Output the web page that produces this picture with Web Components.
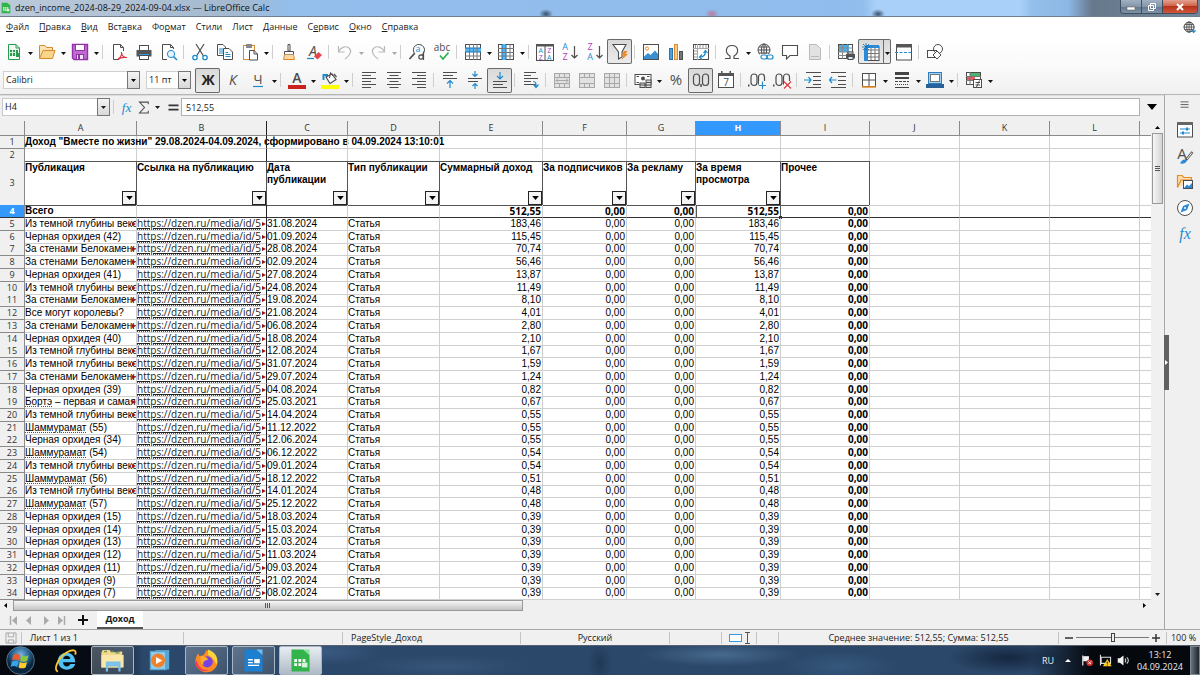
<!DOCTYPE html>
<html lang="ru">
<head>
<meta charset="utf-8">
<title>dzen_income_2024-08-29_2024-09-04.xlsx — LibreOffice Calc</title>
<style>
  html, body { height: 100%; margin: 0; }
  body { font: 9px/12px "Open Sans", "Noto Sans", sans-serif; color: #1a1a1a; background: #f0f0f0; overflow: hidden; }
</style>
</head>
<body>
<calc-window>
  <title-bar slot="title">dzen_income_2024-08-29_2024-09-04.xlsx — LibreOffice Calc</title-bar>
  <menu-bar slot="top"></menu-bar>
  <tool-bar slot="top" label="Стандартная">
    <tool-button icon="new" label="Создать" drop></tool-button>
    <tool-button icon="open" label="Открыть" drop></tool-button>
    <tool-button icon="save" label="Сохранить" drop></tool-button>
    <tool-sep></tool-sep>
    <tool-button icon="pdf" label="Экспорт в PDF"></tool-button>
    <tool-button icon="print" label="Печать"></tool-button>
    <tool-button icon="preview" label="Предварительный просмотр"></tool-button>
    <tool-sep></tool-sep>
    <tool-button icon="cut" label="Вырезать"></tool-button>
    <tool-button icon="copy" label="Копировать"></tool-button>
    <tool-button icon="paste" label="Вставить" drop></tool-button>
    <tool-sep></tool-sep>
    <tool-button icon="brush" label="Копировать форматирование"></tool-button>
    <tool-button icon="clear" label="Очистить форматирование"></tool-button>
    <tool-sep></tool-sep>
    <tool-button icon="undo" label="Отменить" drop off></tool-button>
    <tool-button icon="redo" label="Повторить" drop off></tool-button>
    <tool-sep></tool-sep>
    <tool-button icon="find" label="Найти и заменить"></tool-button>
    <tool-button icon="spell" label="Орфография"></tool-button>
    <tool-sep></tool-sep>
    <tool-button icon="row" label="Строка" drop></tool-button>
    <tool-button icon="col" label="Столбец" drop></tool-button>
    <tool-sep></tool-sep>
    <tool-button icon="sort" label="Сортировка"></tool-button>
    <tool-button icon="asc" label="По возрастанию"></tool-button>
    <tool-button icon="desc" label="По убыванию"></tool-button>
    <tool-button icon="filter" label="Автофильтр" on></tool-button>
    <tool-sep></tool-sep>
    <tool-button icon="image" label="Изображение"></tool-button>
    <tool-button icon="chart" label="Диаграмма"></tool-button>
    <tool-button icon="pivot" label="Сводная таблица"></tool-button>
    <tool-sep></tool-sep>
    <tool-button icon="omega" label="Специальный символ" drop></tool-button>
    <tool-button icon="link" label="Гиперссылка"></tool-button>
    <tool-button icon="comment" label="Комментарий"></tool-button>
    <tool-button icon="header" label="Колонтитулы" off></tool-button>
    <tool-sep></tool-sep>
    <tool-button icon="range" label="Область печати"></tool-button>
    <tool-button icon="freeze" label="Закрепить" drop on></tool-button>
    <tool-button icon="split" label="Разделить окно"></tool-button>
    <tool-sep></tool-sep>
    <tool-button icon="shapes" label="Рисование"></tool-button>
  </tool-bar>
  <tool-bar slot="top" label="Форматирование">
    <combo-select label="Шрифт" value="Calibri" style="--w:137px"></combo-select>
    <combo-select label="Кегль" value="11 пт" style="--w:45px"></combo-select>
    <tool-button icon="bold" label="Полужирный" on></tool-button>
    <tool-button icon="italic" label="Курсив"></tool-button>
    <tool-button icon="under" label="Подчёркивание" drop></tool-button>
    <tool-sep></tool-sep>
    <tool-button icon="color" label="Цвет шрифта" drop></tool-button>
    <tool-button icon="fill" label="Цвет фона" drop></tool-button>
    <tool-sep></tool-sep>
    <tool-button icon="left" label="По левому краю"></tool-button>
    <tool-button icon="center" label="По центру"></tool-button>
    <tool-button icon="right" label="По правому краю"></tool-button>
    <tool-sep></tool-sep>
    <tool-button icon="top" label="По верхнему краю"></tool-button>
    <tool-button icon="middle" label="По центру по вертикали"></tool-button>
    <tool-button icon="bottom" label="По нижнему краю" on></tool-button>
    <tool-sep></tool-sep>
    <tool-button icon="wrap" label="Перенос текста"></tool-button>
    <tool-sep></tool-sep>
    <tool-button icon="merge1" label="Объединить и центрировать" off></tool-button>
    <tool-button icon="merge2" label="Объединить ячейки" off></tool-button>
    <tool-button icon="merge3" label="Разъединить ячейки" off></tool-button>
    <tool-sep></tool-sep>
    <tool-button icon="money" label="Денежный" drop></tool-button>
    <tool-button icon="percent" label="Процентный"></tool-button>
    <tool-button icon="number" label="Числовой" on></tool-button>
    <tool-button icon="date" label="Дата"></tool-button>
    <tool-sep></tool-sep>
    <tool-button icon="decadd" label="Добавить разряд"></tool-button>
    <tool-button icon="decdel" label="Удалить разряд"></tool-button>
    <tool-sep></tool-sep>
    <tool-button icon="indent" label="Увеличить отступ"></tool-button>
    <tool-button icon="outdent" label="Уменьшить отступ"></tool-button>
    <tool-sep></tool-sep>
    <tool-button icon="borders" label="Обрамление" drop></tool-button>
    <tool-button icon="bstyle" label="Стиль обрамления" drop></tool-button>
    <tool-button icon="bcolor" label="Цвет обрамления" drop></tool-button>
    <tool-sep></tool-sep>
    <tool-button icon="cond" label="Условное форматирование" drop></tool-button>
  </tool-bar>
  <formula-bar></formula-bar>
  <sheet-view></sheet-view>
  <sheet-tabs></sheet-tabs>
  <side-bar slot="side"></side-bar>
  <status-bar slot="bottom"></status-bar>
  <task-bar slot="bottom"></task-bar>
</calc-window>

<script>
const define = (tag, render) => customElements.define(tag, class extends HTMLElement {
  connectedCallback() {
    if (this.shadowRoot) return;
    this.attachShadow({ mode: 'open' }).innerHTML =
      '<style>*,:host{box-sizing:border-box}button,input,select{font:inherit;color:inherit;margin:0;padding:0;border:0;background:none;min-width:0}svg{display:block;overflow:visible}</style>' + render(this);
  }
});

/* ---------- icon set, drawn on an 18 x 18 grid ---------- */
const K = '#4d4d4d', B = '#1e8bcd', G = '#a8a8a8';
const p = (d, c = K, w = 1, f = 'none') => `<path d="${d}" stroke="${c}" stroke-width="${w}" fill="${f}"/>`;
const r = (x, y, w, h, f = 'none', s = 'none') => `<rect x="${x}" y="${y}" width="${w}" height="${h}" fill="${f}" stroke="${s}"/>`;
const t = (x, y, size, c, s, extra = '') => `<text x="${x}" y="${y}" font-size="${size}" fill="${c}" text-anchor="middle" font-family="Open Sans, sans-serif" ${extra}>${s}</text>`;
const zero = x => `<rect x="${x}" y="3" width="6" height="11.500" rx="3" fill="none" stroke="${K}" stroke-width="1.200"/>`;
const page = 'M3.5 1.5H10.5L14.5 5.5V16.5H3.5Z';
const merge = inner => r(1.5, 2.5, 15, 14, '#e2e2e2', G) + p('M1 6.5H17M1 12.5H17M6.5 3V6M11.5 3V6M6.5 13V16M11.5 13V16', G) + inner;
const ICONS = {
  new: p('M3.5 1.5H11L14.5 5V16.5H3.5Z', '#2a9a50', 1, '#f3fbf5') + p('M11 1.5V5H14.5', '#2a9a50') + r(5, 7, 8, 6, '#2a9a50') + p('M5 9.5H11M7.5 7V13M10.5 7V13', '#d6f0dd') + r(11, 10, 3, 4, '#2a9a50'),
  open: p('M1.5 15.5V2.5H7L8.5 4.5H14.5V7.5', '#d98a2b', 1, '#fbe3b5') + p('M1.5 15.5L5 7.5H17L14.5 15.5Z', '#d98a2b', 1, '#f9d58a'),
  save: p('M1.5 1.5H16.5V16.5H3L1.5 15Z', '#9232a6', 1.4, '#c06bd0') + r(4.5, 1.5, 9, 6, '#fff', '#9232a6') + r(5.5, 11.5, 7, 5, '#f4e4f7', '#9232a6') + r(7, 12, 2, 4, '#9232a6'),
  pdf: p('M9 16.5H3.5V1.5H10.5L13.5 4.5V8', K, 1, '#fff') + p('M10.5 1.5V4.5H13.5') + p('M8 16C11 14 12 11 11.4 9M11.5 10C12 13 14 14.5 17 14.5M8 16.5C10 14.5 13 14 16.5 14.5', '#d9363e', 1.2),
  print: r(4.5, 2.5, 9, 5, '#fff', K) + r(1.5, 7, 15, 6.5, '#555') + r(4, 11, 10, 1.5, '#2ba0e8') + r(4.5, 12.5, 9, 4, '#fff', K),
  preview: p('M7 16.5H2.5V1.5H10.5L13.5 4.5V6', K, 1, '#fff') + p('M10.5 1.5V4.5H13.5') + '<circle cx="11" cy="11" r="3.6" fill="#e5f4fd" stroke="#1e8bcd"/>' + p('M13.6 13.6L17 17', B, 1.5),
  cut: p('M5 1L12.5 13M13 1L5.5 13', K, 1.2) + '<circle cx="4" cy="14.5" r="2.2" fill="none" stroke="#1e8bcd" stroke-width="1.3"/><circle cx="14" cy="14.5" r="2.2" fill="none" stroke="#1e8bcd" stroke-width="1.3"/>',
  copy: p('M1.5 1.5H7L9.5 4V12.5H1.5Z', K, 1, '#fff') + p('M3 6H7M3 8H7M3 10H7', B) + p('M7.5 5.5H13L16.5 9V16.5H7.5Z', K, 1, '#fff') + p('M9.5 9.5H12M9.5 11.5H14.5M9.5 13.5H14.5', B),
  paste: r(2.5, 2.5, 11, 14, '#fff', '#e0892c') + r(5, 1, 6, 4, '#888') + p('M8.5 7.5H13L16.5 11V17H8.5Z', K, 1, '#fff') + p('M13 7.5V11H16.5'),
  brush: p('M8 1.5H10V8H8Z', K, 1, '#fff') + p('M4.5 8.5H13.5V11.5H4.5Z', K, 1, '#fff') + p('M4.5 11.5L3.5 16.5H14.5L13.5 11.5', '#e0892c', 1, '#fbd9a6'),
  clear: t(8, 13, 14, K, 'A', 'font-style="italic"') + p('M2 15.5H9', B, 1.3) + '<path d="M9 13.5L13.5 9L17 12L12.5 16.5Z" fill="#e64550"/>',
  undo: p('M2.5 3V9H8.5M2.5 8.5C5 4 10 2.5 13 5C16 7.500 15 12 9 16', '#b9b9b9', 1.2),
  redo: p('M15.500 3V9H9.500M15.500 8.500C13 4 8 2.500 5 5C2 7.500 3 12 9 16', '#b9b9b9', 1.2),
  find: '<path d="M13.500 12A5.600 5.600 0 1 0 7 11" fill="none" stroke="#4d4d4d"/>' + t(10, 9, 9, B, 'a') + p('M6.500 10.500L1.500 16', K, 1.800) + '<circle cx="13" cy="14" r="2.200" fill="none" stroke="#4d4d4d" stroke-width="1.200"/>' + p('M15.500 8.500V17', K, 1.200),
  spell: t(9, 8, 10, K, 'abc') + p('M7 12.500L10 16L15.500 9.500', '#27ae48', 1.600),
  row: r(1.5, 1.5, 15, 15, '#fff', K) + r(1, 5, 16, 4, '#5bb5ee') + p('M1 5H17M1 9H17', '#1572b8') + p('M1 13H17M5.500 1V17M9.500 1V17M13 1V17', '#777'),
  col: r(1.5, 1.5, 15, 15, '#fff', K) + r(5, 1, 4, 16, '#5bb5ee') + p('M5 1V17M9 1V17', '#1572b8') + p('M1 5.500H17M1 9.500H17M1 13H17M13 1V17', '#777'),
  sort: r(0.500, 1.500, 17, 16, '#fff', K) + r(0, 1, 18, 2.500, '#555') + p('M9 3V17', K) + t(4.800, 10, 7, B, 'A') + t(4.800, 17, 7, '#b13abf', 'Z') + t(13.200, 10, 7, '#b13abf', 'Z') + t(13.200, 17, 7, B, 'A'),
  asc: t(4, 7, 9, B, 'A') + t(4, 17, 9, '#b13abf', 'Z') + p('M13.500 3V15M10.500 12L13.500 15L16.500 12', K, 1.2),
  desc: t(4, 7, 9, '#b13abf', 'Z') + t(4, 17, 9, B, 'A') + p('M13.500 3V15M10.500 12L13.500 15L16.500 12', K, 1.2),
  filter: p('M2 1.500H15L11 9V14L7.500 16V9Z', K, 1.1, '#fff') + '<path d="M13 8L16.500 8L14.500 11H17L10.500 17L12.500 12.500H10.500Z" fill="#f08a24"/>',
  image: r(1.5, 1.5, 15, 15, '#fff', K) + '<circle cx="5" cy="5.500" r="1.600" fill="none" stroke="#e88c25"/><path d="M2 16V13.500L6 10L8.500 12L13 7.500L16 11V16Z" fill="#3a8fd0"/>',
  chart: r(2.5, 5.5, 3, 11, '#4d9fe0', '#2776ad') + r(7.500, 1.500, 3, 15, '#fbd08a', '#e0892c') + r(12.500, 8.500, 3, 8, '#777', K),
  pivot: r(1.5, 1.5, 15, 15, '#fff', K) + p('M1 5.500H17M5.500 1V17', G) + p('M3.500 2V5M8 2V5M11 2V5M14 2V5M2 8H5M2 11H5M2 14H5', '#999') + p('M8 14C11 14 13.500 12 13.500 8M11.500 10L13.500 7.500L15.500 10M10 11.500L7.500 14L10 16.500', B, 1.2),
  omega: p('M2 15.500H7V13C1 9.500 3 2.500 9 2.500S17 9.500 11 13V15.500H16', K, 1.2),
  link: '<circle cx="8" cy="7" r="6" fill="none" stroke="#4d4d4d"/><ellipse cx="8" cy="7" rx="2.600" ry="6" fill="none" stroke="#4d4d4d"/>' + p('M2 7H14M3 4H13M3 10H13M8 1V13') + r(4, 11, 14, 6, '#fbfbfb') + '<rect x="5" y="12" width="6" height="4" rx="2" fill="none" stroke="#1e8bcd" stroke-width="1.200"/><rect x="11" y="12" width="6" height="4" rx="2" fill="none" stroke="#1e8bcd" stroke-width="1.200"/>',
  comment: p('M1.500 2.500H16.500V12.500H9L5.500 16V12.500H1.500Z', K, 1.1, '#fff'),
  header: p(page, '#b9b9b9', 1, '#e2e2e2') + p('M5 13.500H13', '#b9b9b9'),
  range: r(1.500, 1.500, 14, 14, '#fff', K) + r(2, 2, 10, 7, '#4aaeea') + p('M1 5H16M1 9H16M1 12.500H10M5.500 1V16M10.500 1V12', '#888') + r(9, 11, 9, 4.500, '#555') + r(11, 9, 5, 2, '#fff', K) + r(11, 13.500, 5, 3, '#cdeafc', K),
  freeze: r(4, 3.500, 13, 14, '#fff', K) + p('M4 7H17M4 10.500H17M4 14H17M9 4V17M13 4V17', '#777') + r(4, 2, 13, 3, '#2b8ad8') + r(2, 5, 4, 13, '#2b8ad8') + p('M4 0V8M0 4H8M1 1L7 7M7 1L1 7', '#1572b8', .8),
  split: r(1.5, 2, 15, 15, '#fff', K) + r(1, 1, 16, 3.500, '#555') + p('M0 9.500H18', B).replace('/>', ' stroke-dasharray="3 1.500"/>'),
  shapes: r(1.500, 7.500, 9, 7, '#fff', K) + '<circle cx="12" cy="6" r="4.500" fill="none" stroke="#4d4d4d"/>' + p('M11 8L15 12L11 16L7 12Z', K, 1, '#fff'),
  bold: t(9, 14, 14, '#222', 'Ж', 'font-weight="700"'),
  italic: t(9, 14, 14, K, 'К', 'font-style="italic"'),
  under: t(9, 13, 13, K, 'Ч') + p('M4 15.500H14', B, 1.200),
  color: t(9, 12, 14, K, 'A', 'font-weight="600"') + r(0, 14, 18, 4, '#c9211e'),
  fill: p('M2.500 9V4H7', B, 2) + p('M5 6L11 3L15 8.500L9 12.500Z', K, 1.200, '#fff') + p('M8.500 7L9.500 1.500L12 5', K) + p('M13 3L15.500 6', K, 1.2) + r(0, 14, 18, 4, '#ffff00'),
  left: p('M2 1.500H16M2 4.500H11M2 7.500H16M2 10.500H11M2 13.500H16M2 16.500H11'),
  center: p('M2 1.500H16M4.500 4.500H13.500M2 7.500H16M4.500 10.500H13.500M2 13.500H16M4.500 16.500H13.500'),
  right: p('M2 1.500H16M7 4.500H16M2 7.500H16M7 10.500H16M2 13.500H16M7 16.500H16'),
  top: p('M2 1.500H16M2 4.500H12M2 7.500H16') + p('M9 17V9.500M6 12.500L9 9.500L12 12.500', B, 1.2),
  middle: p('M2 7.500H16M2 10.500H12') + p('M9 0V5.500M6.500 3L9 5.500L11.500 3M9 18V12.500M6.500 15L9 12.500L11.500 15', B, 1.2),
  bottom: p('M2 10.500H16M2 13.500H12M2 16.500H16') + p('M9 1V8M6 5L9 8L12 5', B, 1.2),
  wrap: p('M2 1.500H14M2 4.500H9M2 7.500H16M2 10.500H9M2 13.500H14') + p('M11 10.500C14 10.500 14 12 14 16M11.500 13.500L14 16.500L16.500 13.500', B, 1.2),
  merge1: merge(p('M3 9.500H15M5 7.500L3 9.500L5 11.500M13 7.500L15 9.500L13 11.500', G)),
  merge2: merge(''),
  merge3: merge(p('M6.500 6V13M11.500 6V13', G)),
  money: r(1, 3.500, 16, 10, '#fff', K) + p('M2.500 5.500H5M13 5.500H15.500M2.500 11.500H5') + '<circle cx="9" cy="7.500" r="2" fill="#4d4d4d"/>' + r(6, 12, 5, 4.500, '#ddd', K) + r(12, 9, 5, 7.500, '#ddd', K) + p('M12 11.500H17M6 14H17'),
  percent: t(9, 14, 15, K, '%'),
  number: zero(1.500) + zero(10.500) + r(8.300, 13, 1.500, 3, K),
  date: r(1.500, 2.500, 15, 14, '#fff', K) + r(1, 2, 16, 3, '#555') + r(4, 0, 1.500, 3, '#555') + r(12.500, 0, 1.500, 3, '#555') + t(9, 15, 10, K, '7'),
  decadd: r(0, 13.500, 1.500, 2, K) + zero(3) + zero(10.500) + r(11, 10, 7, 8, '#fafafa') + p('M14.500 10.500V18M11 14.500H18', B, 1.200),
  decdel: r(0, 13.500, 1.500, 2, K) + zero(3) + zero(10.500) + r(11, 10, 7, 8, '#fafafa') + p('M11 10.500L18 17.500M18 10.500L11 17.500', '#e0343c', 1.200),
  indent: p('M2 1.500H17M9 5.500H17M9 9.500H17M9 13.500H17M2 16.500H17') + p('M0 9H7M4.500 6L7 9L4.500 12', B, 1.200),
  outdent: p('M2 1.500H17M9 5.500H17M9 9.500H17M9 13.500H17M2 16.500H17') + p('M0 9H7.500M3 6L0.500 9L3 12', B, 1.200),
  borders: r(2.500, 2.500, 13, 13, '#fff', K) + p('M2 9H16M9 2V16') + p('M2 16H16', '#e88c25', 1.500),
  bstyle: r(2, 1, 14, 3, '#444') + r(2, 6, 14, 2, '#444') + p('M2 10.500H16', '#444').replace('/>', ' stroke-dasharray="3 1"/>') + p('M2 13.500H16', '#444').replace('/>', ' stroke-dasharray="1 1"/>') + p('M2 16.500H16', '#444'),
  bcolor: r(2.500, 1.500, 13, 11, '#9fd0f2', '#2b7fc0') + r(4.500, 3.500, 9, 7, '#fff', '#777') + r(0, 13, 18, 4, '#2a6099'),
  cond: r(1.500, 1.500, 14, 12, '#fff', K) + r(5, 2, 10, 3, '#4bb36b') + r(2, 6, 8, 3, '#e65a62') + p('M1 5.500H16M1 9.500H10M5 1V14', '#777') + r(8.500, 8.500, 8, 8, '#fff', K) + p('M10.500 11.500H15M10.500 14H15M11.500 16L14.500 9.500'),
  fx: t(9, 14, 16, B, 'fx', 'font-style="italic"').replace('Open Sans, sans-serif', 'Liberation Serif, serif'),
  sigma: p('M13.500 5V2.500H3L9 9L3 15.500H13.500V13', K, 1.300),
  equals: p('M3 6.500H15M3 11.500H15', '#333', 2),
  props: r(1.500, 2, 15, 14, '#fff', K) + r(1, 1, 16, 3, '#666') + p('M4 8H14M4 12H14', B) + r(10, 6.500, 2, 3, B) + r(6, 10.500, 2, 3, B),
  styles: t(6, 12, 15, K, 'A') + p('M16.500 5L10 13', K, 2.500) + p('M16 5.500L11 12', '#fff', 1) + '<path d="M4 16.500C6 12 9 11.500 11 13.500C10 16.500 7 17 4 16.500Z" fill="#2b8ad8"/>',
  gallery: p('M1.500 14.500V2.500H6L8 4.500H15.500V7M1.500 14.500L5 7H16', '#e88c25', 1.200, '#fbdcae') + r(7.500, 7.500, 9, 8, '#fff', K) + '<path d="M8 15L11 11.500L13 13L16 10V15Z" fill="#2b8ad8"/>',
  compass: '<circle cx="9" cy="9" r="7.500" fill="#fff" stroke="#4d4d4d"/><path d="M13.500 4.500L11 11L4.500 13.500L7 7Z" fill="#2b8ad8"/><circle cx="9" cy="9" r="1" fill="#fff"/>',
  menu: p('M4 5.500H13M4 8.500H13M4 11.500H13', '#555'),
  update: '<circle cx="8.500" cy="8.500" r="6" fill="none" stroke="#444" stroke-width="1.200"/><ellipse cx="8.500" cy="8.500" rx="2.800" ry="6" fill="none" stroke="#444"/>' + p('M2 8.500H15M3.500 5.500H13.500M3.500 11.500H13.500M8.500 2V15', '#444') + p('M14 9V15M11.500 12.500L14 15L16.500 12.500', B, 1.300),
  disk: p('M2.500 2.500H15.500V15.500H2.500ZM5.500 2.500V7.500H12.500V2.500M5.500 15.500V11.500H12.500V15.500', '#999'),
  win: '<defs><radialGradient id="o" cx=".5" cy=".3"><stop offset="0" stop-color="#7fb7dc"/><stop offset=".6" stop-color="#2a6595"/><stop offset="1" stop-color="#0b2740"/></radialGradient></defs><circle cx="9" cy="9" r="8.600" fill="url(#o)" stroke="#7d9db3" stroke-width=".4"/><path d="M4.500 5.500C6 4.700 7.500 4.700 8.800 5.500L8 8.900C6.800 8.200 5.300 8.200 3.800 8.900Z" fill="#ee5a2a"/><path d="M9.500 5.800C11 6.500 12.500 6.500 14 5.800L13.200 9.200C11.800 9.900 10.200 9.900 8.800 9.200Z" fill="#8cc63f"/><path d="M3.600 9.700C5 9 6.500 9 7.800 9.700L7 13C5.800 12.300 4.300 12.300 2.900 13Z" fill="#37a3e8"/><path d="M8.600 10C10 10.700 11.500 10.700 13 10L12.200 13.300C10.800 14 9.200 14 7.800 13.300Z" fill="#fdcb2e"/>',
  ie: '<path fill-rule="evenodd" d="M16 11.500C14.500 17 4.500 17.500 3.500 9.500C3.500 1.500 16 1 16 10.200H7.200C7.500 14 11.500 14 12.500 11.500ZM7.300 8H12.500C12 4.800 7.800 4.800 7.300 8Z" fill="#4fc0f2"/><path d="M3.500 17C0 15.500 3.500 7.500 9.500 3.500C13.500 .8 17.500 .8 16 4.800" fill="none" stroke="#fdc72f" stroke-width="1.300"/>',
  folder: '<path d="M1 3L2 1.500H7L8 3L16 2.500V14H1Z" fill="#f2d788"/><path d="M3 2.500H5M8 2.500H10M11 3.500H14" stroke="#5b9b55"/><path d="M1 5H17V14H1Z" fill="#fbe8a8"/><path d="M5 10.500H14V12.500H5ZM5 12V17M14 12V17" fill="#9fd3f1" stroke="#79bfe8" stroke-width="1.600"/>',
  media: r(6, 1.500, 10, 14, '#57a7d6') + r(2.500, 2.500, 11, 13, '#8fcdf0', '#5ba4cc') + '<circle cx="8" cy="9" r="5" fill="#f2802a"/><path d="M6.500 6.500L11 9L6.500 11.500Z" fill="#fff"/>',
  firefox: '<path d="M9 1.500L12 4C15 5 17.500 8 17 11C16 15 13 17.500 9 17.500S1 14 1 10C1 7 2 5.500 3 4L4 6L7 5Z" fill="#ff8a24"/><path d="M10 1C16 3 18 8 16 12C15 8 12 6 10 5Z" fill="#ffd43a"/><path d="M2 9C3 14 7 17 12 16C7 18.500 1 15 1 10Z" fill="#f43b57"/><circle cx="9.500" cy="10" r="4" fill="#7542e5"/><path d="M5 6C8 6 10 7 10 8.500C7.500 9 6 10 7 12.500C4.500 11 4 8 5 6Z" fill="#ffab2e"/>',
  writer: '<path d="M2.500 1H11L15.500 5V17H2.500Z" fill="#1d7fd0"/><path d="M11 1H15.500V5Z" fill="#6ec0f7"/>' + p('M5 8.500H8.500M5 10.500H8.500M5 12.500H13', '#fff') + r(9.500, 8, 4, 3, '#fff'),
  calc: '<path d="M2.500 1H11L15.500 5V17H2.500Z" fill="#31b44a"/><path d="M11 1H15.500V5Z" fill="#8be39b"/>' + r(4.500, 8, 8, 5, '#fff') + p('M4.500 10.500H12.500M7 8V13M10 8V13', '#31b44a') + r(10, 10.500, 4, 3.500, '#d7f5dc'),
  flag: p('M2.500 2V16', '#fff', 1.500) + '<path d="M3 3H11V10H3Z" fill="#f2f2f2"/><circle cx="12" cy="12" r="4.500" fill="#d9302c"/>' + p('M10.300 10.300L13.700 13.700M13.700 10.300L10.300 13.700', '#fff', 1.300),
  net: p('M3 4.500H16V13H3ZM2 1V16', '#ddd', 1.500) + '<path d="M11.500 7L17.500 17H5.500Z" fill="#ffd21f"/>' + p('M11.500 10.500V13.500M11.500 14.500V16', '#222', 1.400),
  sound: '<path d="M1 6H4L9 2V16L4 12H1Z" fill="#f2f2f2"/>' + p('M11 6.500C12.500 8 12.500 10 11 11.500M13.500 4.500C16.500 7.500 16.500 10.500 13.500 13.500', '#ddd', 1.400)
};
define('calc-icon', el => `<style>:host{display:block;width:var(--icon,18px);height:var(--icon,18px)}svg{width:100%;height:100%}</style>
  <svg viewBox="0 0 18 18" aria-hidden="true">${ICONS[el.getAttribute('name')]}</svg>`);

const ARROW = '<svg class="arrow" width="5" height="3" viewBox="0 0 5 3" aria-hidden="true"><path d="M0 0H5L2.500 3Z" fill="currentColor"/></svg>';

/* ---------- window frame ---------- */
define('calc-window', () => `<style>
  :host{display:flex;flex-direction:column;height:100vh}
  .main{display:flex;flex:1;min-height:0}
  .work{display:flex;flex-direction:column;flex:1;min-width:0}
  </style><slot name="title"></slot><slot name="top"></slot>
  <div class="main"><div class="work"><slot></slot></div><slot name="side"></slot></div>
  <slot name="bottom"></slot>`);

define('title-bar', () => `<style>
  :host{display:flex;align-items:center;gap:3px;flex:none;height:17px;border-bottom:1px solid #6f7f90;color:#111;
    background:radial-gradient(ellipse 7px 5px at 546px 14px,#39516b,transparent),radial-gradient(ellipse 7px 5px at 712px 14px,#b77b98,transparent),
    radial-gradient(ellipse 7px 5px at 878px 14px,#39516b,transparent),
    linear-gradient(90deg,#bccada 0,#adc0d4 12%,#a3b9cf 20%,#94beec 24%,#8fbcec 70%,#93bfee 72%,#a9d0f8 73%,#a9d0f8 85%,#94bfeb 86%,#8db8e5 89%,#66798c 91%,#73879b 100%)}
  calc-icon{--icon:12px}
  h1{flex:1;margin:0;font-size:9px;font-weight:400;white-space:nowrap}
  .ctl{display:flex;align-self:flex-start;height:14px;margin-right:2px;border:1px solid #3f4f60;border-top:0;border-radius:0 0 4px 4px;overflow:hidden}
  button{display:grid;place-items:center;width:21px;color:#fff;background:linear-gradient(#9fb0c2,#8496a9 50%,#64788d 52%,#7e93a8);border-right:1px solid #3f4f60}
  button:last-child{width:34px;border:0;background:linear-gradient(#e3a28f,#d0634b 45%,#b7331b 50%,#d1583a)}
  </style><calc-icon name="calc"></calc-icon><h1><slot></slot></h1>
  <div class="ctl">
  <button aria-label="Свернуть"><svg width="10" height="10"><rect x="1" y="5" width="8" height="3" fill="#fff" stroke="#555" stroke-width=".5"/></svg></button>
  <button aria-label="Восстановить"><svg width="10" height="10"><path d="M3.500 1.500H8.500V6.500H3.500ZM1.500 3.500H6.500V8.500H1.500Z" fill="none" stroke="#fff"/></svg></button>
  <button aria-label="Закрыть"><svg width="10" height="10"><path d="M2 2L8 8M8 2L2 8" stroke="#fff" stroke-width="2"/></svg></button></div>`);

define('menu-bar', () => `<style>
  :host{display:flex;align-items:center;justify-content:space-between;flex:none;height:20px;padding:0 3px 0 6px;background:#fff}
  nav{display:flex;gap:10px}u{text-underline-offset:1px}
  calc-icon{--icon:15px}
  </style><nav aria-label="Меню">${['<u>Ф</u>айл', '<u>П</u>равка', '<u>В</u>ид', 'Вст<u>а</u>вка', 'Фо<u>р</u>мат', 'Стили', 'Лист', '<u>Д</u>анные', 'С<u>е</u>рвис', '<u>О</u>кно', '<u>С</u>правка'].map(x => `<button>${x}</button>`).join('')}</nav>
  <button aria-label="Обновления"><calc-icon name="update"></calc-icon></button>`);

/* ---------- toolbars ---------- */
define('tool-bar', el => `<style>
  :host{display:flex;align-items:center;flex:none;height:29px;padding-left:1px;background:linear-gradient(#fff,#fafafa)}
  :host([label="Форматирование"]){background:linear-gradient(#fafafa,#f0f0f0);border-bottom:1px solid #b5b5b5}
  div{display:flex;align-items:center}
  </style><div role="toolbar" aria-label="${el.getAttribute('label')}"><slot></slot></div>`);
define('tool-sep', () => `<style>:host{display:block;width:6px;height:14px}i{display:block;width:1px;height:14px;margin-left:2px;background:#cfcfcf}</style><i></i>`);
define('tool-button', el => `<style>
  :host{display:flex;height:25px;border-radius:2px}
  :host([on]){background:linear-gradient(#d8d8d8,#ececec);box-shadow:inset 0 0 0 1px #6a6a6a}
  button{display:grid;place-items:center;width:25px;height:25px}
  .drop{width:8px;padding-top:3px;color:#111}
  :host([on]) .drop{border-left:1px solid #6a6a6a}
  :host([off]) .drop{color:#aaa}
  </style><button aria-label="${el.getAttribute('label')}" ${el.hasAttribute('off') ? 'disabled' : ''}><calc-icon name="${el.getAttribute('icon')}"></calc-icon></button>
  ${el.hasAttribute('drop') ? `<button class="drop" aria-label="${el.getAttribute('label')}: варианты">${ARROW}</button>` : ''}`);
define('combo-select', el => `<style>
  :host{display:block;width:var(--w);margin:0 4px 0 2px}
  label{display:grid;height:18px}
  select,span{grid-area:1/1}
  select{appearance:none;width:100%;padding-left:2px;background:#fff;border:1px solid #d0d0d0}
  span{display:grid;place-items:center;justify-self:end;width:13px;pointer-events:none;color:#000;background:linear-gradient(#f4f4f4,#d8d8d8);border:1px solid #777}
  </style><label><select aria-label="${el.getAttribute('label')}"><option>${el.getAttribute('value')}</option></select><span>${ARROW}</span></label>`);

/* ---------- formula bar ---------- */
define('formula-bar', () => `<style>
  :host{display:flex;align-items:center;flex:none;height:26px;padding:0 0 3px 2px;background:#f0f0f0;border-top:1px solid #dcdcdc}
  .name{display:flex;width:108px;height:18px;background:#fff;border:1px solid #c8c8c8}
  .name input{flex:1;padding-left:2px}
  .name button{display:grid;place-items:center;width:13px;background:linear-gradient(#f4f4f4,#d8d8d8);border:1px solid #777;margin:-1px}
  tool-sep{margin:0 2px 0 1px}
  .fns{display:flex;align-items:center;width:62px;gap:3px;--icon:15px}
  .fns .more{width:8px}
  .line{flex:1;height:18px;padding-left:4px;background:#fff;border:1px solid #b0b0b0}
  .expand{display:grid;place-items:center;width:24px}
  </style>
  <div class="name"><input aria-label="Поле имени" value="H4"><button aria-label="Список имён">${ARROW}</button></div>
  <tool-sep></tool-sep>
  <div class="fns"><button aria-label="Мастер функций"><calc-icon name="fx"></calc-icon></button><button aria-label="Сумма"><calc-icon name="sigma"></calc-icon></button><button class="more" aria-label="Функции">${ARROW}</button><button aria-label="Формула"><calc-icon name="equals"></calc-icon></button></div>
  <input class="line" aria-label="Строка ввода" value="512,55">
  <button class="expand" aria-label="Развернуть"><svg width="10" height="6"><path d="M0 0H10L5 6Z"/></svg></button>`);

/* ---------- sheet ---------- */
const T = 'Из темной глубины веко', S = 'За стенами Белокаменн', O = n => `Черная орхидея (${n})`, M = n => `Шаммурамат (${n})`;
const ROWS = [[T, '31.08.2024', '183,46'], [O(42), '01.09.2024', '115,45'], [S, '28.08.2024', '70,74'], [S, '02.09.2024', '56,46'], [O(41), '27.08.2024', '13,87'],
  [T, '24.08.2024', '11,49'], [S, '19.08.2024', '8,10'], ['Все могут королевы?', '21.08.2024', '4,01'], [S, '06.08.2024', '2,80'], [O(40), '18.08.2024', '2,10'],
  [T, '12.08.2024', '1,67'], [T, '31.07.2024', '1,59'], [S, '29.07.2024', '1,24'], [O(39), '04.08.2024', '0,82'], ['Бортэ – первая и самая', '25.03.2021', '0,67'],
  [T, '14.04.2024', '0,55'], [M(55), '11.12.2022', '0,55'], [O(34), '12.06.2024', '0,55'], [M(54), '06.12.2022', '0,54'], [T, '09.01.2024', '0,54'],
  [M(56), '18.12.2022', '0,51'], [T, '14.01.2024', '0,48'], [M(57), '25.12.2022', '0,48'], [O(15), '18.03.2024', '0,39'], [O(14), '15.03.2024', '0,39'],
  [O(13), '12.03.2024', '0,39'], [O(12), '11.03.2024', '0,39'], [O(11), '09.03.2024', '0,39'], [O(9), '21.02.2024', '0,39'], [O(7), '08.02.2024', '0,39']];
const HEADS = ['Публикация', 'Ссылка на публикацию', 'Дата публикации', 'Тип публикации', 'Суммарный доход', 'За подписчиков', 'За рекламу', 'За время просмотра', 'Прочее'];
const spell = s => s.replace(/Шаммурамат|Бортэ/, '<span class="sp">$&</span>');
const clip = '<i class="clip"></i>';
const tail = '<td></td>'.repeat(4);
const URLTXT = 'https://dzen.ru/media/id/5';
define('sheet-view', () => `<style>
  :host{display:grid;grid-template:minmax(0,1fr) 11px/minmax(0,1fr) 13px;flex:1;min-height:0;background:#f0f0f0}
  table,thead,tbody{display:flex;flex-direction:column;min-height:0}
  table{overflow:hidden}tbody{flex:1}
  tr{display:grid;grid-template-columns:25px 112px 130px 81px 92px 103px 84px 69px 85px 89px 90px 90px 90px minmax(0,1fr);flex:1;min-height:0}
  th,td{position:relative;min-width:0;padding:0 1px 0 0;border:solid #cfcfcf;border-width:0 1px 1px 0;white-space:nowrap;text-align:left;font:10px/12px "Liberation Sans",Arial,sans-serif;color:#000}
  tbody{background:#fff}
  tr>:last-child{border-right:0}
  thead th,th[scope=row]{padding:0;font:9px/14px "Open Sans","Noto Sans",sans-serif;color:#333;text-align:center;background:#f0f0f0;border-color:#8a8a8a}
  th[scope=row]{line-height:12px}
  thead tr{flex:none;height:15px}
  .r1{flex:none;height:13px}.r2{flex:none;height:12px}.r3{flex:none;height:44px}.r4{flex:none;height:13px}
  tr>:nth-child(3){border-right-color:#222}
  thead .sel,.r4 th[scope=row]{background:#3399ff;color:#fff;font-weight:700}
  .r1 td:nth-child(2){font-weight:700}
  .r2 td:nth-child(-n+10){border-bottom-color:#555}
  .r3 th[scope=row]{line-height:44px}
  .r3 th[scope=col]{padding-top:1px;font-weight:700;line-height:12px;white-space:normal;border-color:#555}
  .r4 td,.r4 th{border-bottom-color:#333}
  .r4 td{font-weight:700}
  td.n{text-align:right}
  .r4 td.n{font:700 10px/12px "Open Sans","Noto Sans",sans-serif}
  .data td.b{font:700 10px/10px "Open Sans","Noto Sans",sans-serif}
  .data td:nth-child(2){overflow:hidden}
  .data td:nth-child(3){font:10px/10px "Open Sans","Noto Sans",sans-serif}
  .data a{color:#222;text-underline-offset:1px}
  .sp{text-decoration:underline dotted #e01818 1px;text-underline-offset:1px}
  .data a .sp{text-underline-offset:2px}
  .clip{position:absolute;right:0;top:4px;border:solid transparent;border-width:2px 0 2px 4px;border-left-color:#a01010}
  .f{position:absolute;right:0;bottom:0;display:grid;place-items:center;width:14px;height:14px;background:#f4f4f4;border:1px solid #222}
  .f svg{width:7px;height:4px}
  .cur{outline:1px solid #555;outline-offset:-1px}
  .cur::after{content:"";position:absolute;right:-2px;bottom:-2px;width:3px;height:3px;background:#333}
  .v{display:flex;flex-direction:column;align-items:center;padding:5px 0 4px;background:#f0f0f0}
  .v div{width:11px;height:71px;margin:4px 0 auto;display:grid;place-items:center;background:linear-gradient(90deg,#f6f6f6,#d4d4d4);border:1px solid #999}
  .h{display:flex;align-items:center;gap:6px;padding:0 5px 0 4px}
  .h div{width:510px;height:11px;display:grid;place-items:center;background:linear-gradient(#f6f6f6,#c4c4c4);border:1px solid #999;margin-right:auto}
  </style>
  <table><thead><tr><th></th>${'ABCDEFGHIJKL'.split('').map(c => `<th scope="col"${c === 'H' ? ' class="sel"' : ''}>${c}</th>`).join('')}<th></th></tr></thead>
  <tbody>
  <tr class="r1"><th scope="row">1</th><td>Доход "Вместе по жизни" 29.08.2024-04.09.2024, сформировано в 04.09.2024 13:10:01</td>${'<td></td>'.repeat(8)}${tail}</tr>
  <tr class="r2"><th scope="row">2</th>${'<td></td>'.repeat(9)}${tail}</tr>
  <tr class="r3"><th scope="row">3</th>${HEADS.map((h, i) => `<th scope="col">${h}${i < 8 ? `<button class="f" aria-label="Фильтр: ${h}">${ARROW}</button>` : ''}</th>`).join('')}${tail}</tr>
  <tr class="r4"><th scope="row">4</th><td>Всего</td><td></td><td></td><td></td><td class="n">512,55</td><td class="n">0,00</td><td class="n">0,00</td><td class="n cur">512,55</td><td class="n">0,00</td>${tail}</tr>
  ${ROWS.map(([a, d, v], i) => `<tr class="data"><th scope="row">${i + 5}</th><td>${spell(a)}${/веко|Белок|Бортэ/.test(a) ? clip : ''}</td><td><a href="https://dzen.ru/media/id/"><span class="sp">${URLTXT}</span></a>${clip}</td><td>${d}</td><td>Статья</td><td class="n">${v}</td><td class="n">0,00</td><td class="n">0,00</td><td class="n">${v}</td><td class="n b">0,00</td>${tail}</tr>`).join('')}
  </tbody></table>
  <div class="v"><svg width="5" height="3"><path d="M0 3L2.500 0L5 3Z"/></svg><div><svg width="5" height="6"><path d="M0 .5H5M0 2.500H5M0 4.500H5" stroke="#555"/></svg></div>${ARROW}</div>
  <div class="h"><svg width="3" height="5"><path d="M3 0L0 2.500L3 5Z"/></svg><div><svg width="6" height="5"><path d="M.5 0V5M2.500 0V5M4.500 0V5" stroke="#555"/></svg></div><svg width="3" height="5"><path d="M0 0L3 2.500L0 5Z"/></svg></div>`);

define('sheet-tabs', () => `<style>
  :host{display:flex;align-items:stretch;flex:none;height:18px;padding-left:5px;background:#f0f0f0}
  button{display:grid;place-items:center;width:16px}
  .add{width:28px}
  .tab{width:46px;background:#fff;font-weight:700;border-bottom:2px solid #555}
  </style>
  <button aria-label="Первый лист"><svg width="9" height="9"><path d="M1.500 0V9" stroke="#aaa" stroke-width="1.500"/><path d="M8 0V9L3 4.500Z" fill="#aaa"/></svg></button>
  <button aria-label="Предыдущий лист"><svg width="9" height="9"><path d="M6 0V9L1 4.500Z" fill="#aaa"/></svg></button>
  <button aria-label="Следующий лист"><svg width="9" height="9"><path d="M3 0V9L8 4.500Z" fill="#aaa"/></svg></button>
  <button aria-label="Последний лист"><svg width="9" height="9"><path d="M7.500 0V9" stroke="#aaa" stroke-width="1.500"/><path d="M1 0V9L6 4.500Z" fill="#aaa"/></svg></button>
  <button class="add" aria-label="Добавить лист"><svg width="10" height="10"><path d="M5 0V10M0 5H10" stroke="#111" stroke-width="2"/></svg></button>
  <button class="tab">Доход</button>`);

define('side-bar', () => `<style>
  :host{position:relative;display:flex;flex-direction:column;align-items:center;gap:8px;flex:none;width:36px;padding:2px 0 0 5px;background:#f0f0f0;border-left:1px solid #a8a8a8}
  button{display:block}
  .menu{--icon:16px}
  .grip{position:absolute;left:-1px;top:45%;display:grid;place-items:center;width:5px;height:55px;background:#606060}
  </style><button class="menu" aria-label="Параметры боковой панели"><calc-icon name="menu"></calc-icon></button>
  ${[['props', 'Свойства'], ['styles', 'Стили'], ['gallery', 'Галерея'], ['compass', 'Навигатор'], ['fx', 'Функции']].map(([i, l]) => `<button aria-label="${l}"><calc-icon name="${i}"></calc-icon></button>`).join('')}
  <button class="grip" aria-label="Скрыть панель"><svg width="3" height="5"><path d="M0 0L3 2.500L0 5Z" fill="#fff"/></svg></button>`);

define('status-bar', () => `<style>
  :host{display:grid;grid-template-columns:22px 162fr 159fr 178fr 149fr 52px 35px 22px 280fr 108px 33px;align-items:center;flex:none;height:16px;background:#f0f0f0;border-top:1px solid #a8a8a8;white-space:nowrap}
  span{display:flex;align-items:center;justify-content:center;height:12px;min-width:0;border-right:1px solid #c4c4c4;--icon:14px}
  .l{justify-content:flex-start;padding-left:8px}
  .z{gap:3px}
  .pct{border:0}
  input{appearance:none;width:73px;height:11px;background:linear-gradient(#777,#777) center/100% 1px no-repeat}
  input::-webkit-slider-thumb{appearance:none;width:4px;height:9px;background:#f0f0f0;border:1px solid #444}
  </style><span><calc-icon name="disk"></calc-icon></span><span class="l">Лист 1 из 1</span><span></span><span class="l">PageStyle_Доход</span><span>Русский</span><span></span>
  <span><svg width="24" height="12"><rect x="2.500" y="2.500" width="12" height="7" fill="#fff" stroke="#3a9ad9"/><path d="M18 .5H23M20.500 1V11M18 11.500H23" stroke="#555" fill="none"/></svg></span><span></span>
  <span>Среднее значение: 512,55; Сумма: 512,55</span>
  <span class="z"><button aria-label="Уменьшить"><svg width="8" height="8"><path d="M0 4H8" stroke="#333" stroke-width="1.500"/></svg></button><input type="range" min="0" max="100" value="50" aria-label="Масштаб"><button aria-label="Увеличить"><svg width="8" height="8"><path d="M0 4H8M4 0V8" stroke="#333" stroke-width="1.500"/></svg></button></span>
  <span class="pct">100 %</span>`);

define('task-bar', () => `<style>
  :host{display:flex;align-items:center;flex:none;height:30px;color:#eee;border-top:1px solid #56616d;
    background:linear-gradient(90deg,#05090f 0,#070c14 8%,transparent 12%,transparent 86%,#05080d 91%,#05080d),
    radial-gradient(ellipse 60px 14px at 27% 20%,#3a5a82,transparent),radial-gradient(ellipse 90px 12px at 37% 70%,#365579,transparent),radial-gradient(ellipse 12px 20px at 50% 60%,#1f3856,transparent),
    radial-gradient(ellipse 80px 12px at 60% 30%,#476a8d,transparent),radial-gradient(ellipse 60px 16px at 70% 70%,#35587c,transparent),radial-gradient(ellipse 60px 16px at 84% 40%,#152740,transparent),#2b4769}
  .apps,.tray{display:flex;align-items:center}
  .apps{gap:4px;flex:1}
  .apps button{display:grid;place-items:center;width:43px;height:29px;--icon:25px}
  .apps .start{width:40px;--icon:29px}
  .run{background:linear-gradient(135deg,#8d9bab88,#4d5d7088);border:1px solid #a9b6c4!important;border-radius:2px}
  .apps .act{background:linear-gradient(#e8edf2,#aebac6)}
  .tray{gap:5px;--icon:13px}
  time{display:flex;flex-direction:column;width:50px;text-align:center}
  .desk{width:10px;height:29px;background:linear-gradient(90deg,#69737e,#1d242c);border:1px solid #7c8792}
  .up{margin:0 5px 0 6px}
  </style>
  <div class="apps"><button class="start" aria-label="Пуск"><calc-icon name="win"></calc-icon></button><button aria-label="Internet Explorer"><calc-icon name="ie"></calc-icon></button><button class="run" aria-label="Проводник"><calc-icon name="folder"></calc-icon></button><button aria-label="Проигрыватель"><calc-icon name="media"></calc-icon></button><button class="run" aria-label="Firefox"><calc-icon name="firefox"></calc-icon></button><button class="run" aria-label="Writer"><calc-icon name="writer"></calc-icon></button><button class="run act" aria-label="Calc"><calc-icon name="calc"></calc-icon></button></div>
  <div class="tray"><span>RU</span><button class="up" aria-label="Скрытые значки"><svg width="6" height="3"><path d="M0 3L3 0L6 3Z" fill="#fff"/></svg></button><calc-icon name="flag"></calc-icon><calc-icon name="net"></calc-icon><calc-icon name="sound"></calc-icon><time>13:12<span>04.09.2024</span></time><button class="desk" aria-label="Свернуть все окна"></button></div>`);
</script>
</body>
</html>
